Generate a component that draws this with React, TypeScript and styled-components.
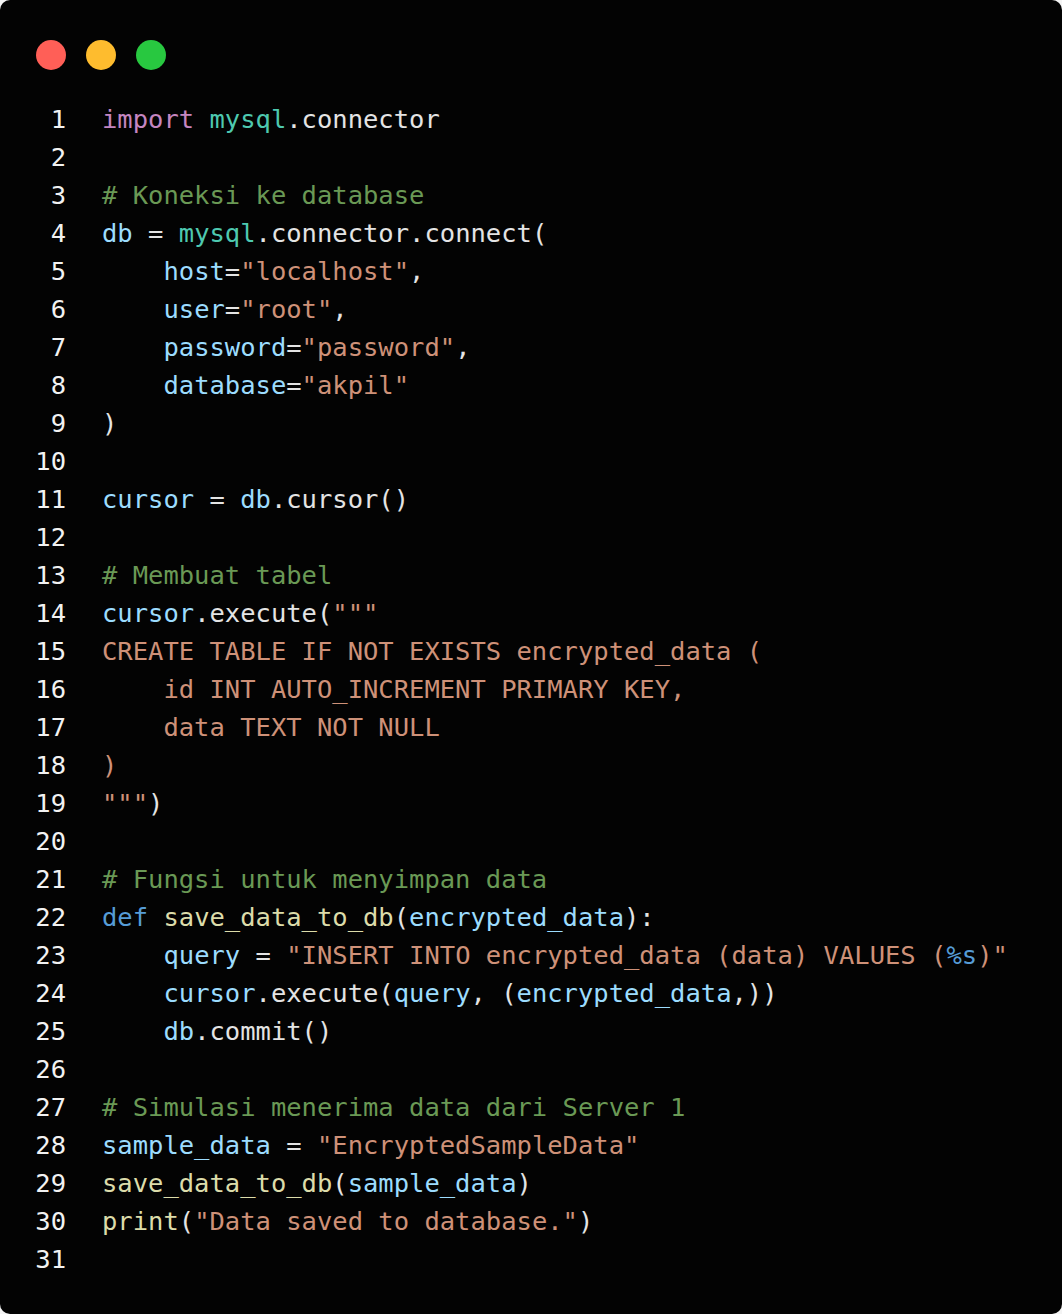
import React from "react";
import styled, { createGlobalStyle } from "styled-components";

const Global = createGlobalStyle`
  html, body { margin: 0; padding: 0; background: #f4f4f4; }
  #root { width: 1062px; }
`;

type Kind = "plain" | "kw" | "cls" | "var" | "str" | "com" | "def" | "fn" | "esc";

const colors: Record<Kind, string> = {
  plain: "#e4e4e4",
  kw: "#c586c0",
  cls: "#4ec9b0",
  var: "#9cdcfe",
  str: "#ce9178",
  com: "#6a9955",
  def: "#569cd6",
  fn: "#dcdcaa",
  esc: "#569cd6",
};

const Card = styled.div`
  width: 1062px;
  height: 1314px;
  box-sizing: border-box;
  background: #030303;
  border-radius: 10px;
  padding: 40px 0 0 24px;
  display: flex;
  flex-direction: column;
  gap: 30px;
  overflow: hidden;
`;

const Dots = styled.div`
  display: flex;
  gap: 20px;
  padding-left: 12px;
`;

const Dot = styled.span<{ $c: string }>`
  width: 30px;
  height: 30px;
  border-radius: 50%;
  background: ${(p) => p.$c};
`;

const Code = styled.div`
  display: flex;
  flex-direction: column;
  font-family: "DejaVu Sans Mono", "Liberation Mono", monospace;
  font-size: 25.5px;
  line-height: 38px;
`;

const Row = styled.div`
  display: grid;
  grid-template-columns: 42px 1fr;
  column-gap: 36px;
  height: 38px;
`;

const Num = styled.span`
  text-align: right;
  color: #f2f2f2;
`;

const Text = styled.span`
  white-space: pre;
  color: ${colors.plain};
`;

const Tok = styled.span<{ $k: Kind }>`
  color: ${(p) => colors[p.$k]};
`;

type Seg = [Kind, string];
const P = (s: string): Seg => ["plain", s];
const V = (s: string): Seg => ["var", s];
const S = (s: string): Seg => ["str", s];
const C = (s: string): Seg => ["com", s];
const F = (s: string): Seg => ["fn", s];

const lines: Seg[][] = [
  [["kw", "import"], P(" "), ["cls", "mysql"], P(".connector")],
  [],
  [C("# Koneksi ke database")],
  [V("db"), P(" = "), ["cls", "mysql"], P(".connector.connect(")],
  [P("    "), V("host"), P("="), S('"localhost"'), P(",")],
  [P("    "), V("user"), P("="), S('"root"'), P(",")],
  [P("    "), V("password"), P("="), S('"password"'), P(",")],
  [P("    "), V("database"), P("="), S('"akpil"')],
  [P(")")],
  [],
  [V("cursor"), P(" = "), V("db"), P(".cursor()")],
  [],
  [C("# Membuat tabel")],
  [V("cursor"), P(".execute("), S('"""')],
  [S("CREATE TABLE IF NOT EXISTS encrypted_data (")],
  [S("    id INT AUTO_INCREMENT PRIMARY KEY,")],
  [S("    data TEXT NOT NULL")],
  [S(")")],
  [S('"""'), P(")")],
  [],
  [C("# Fungsi untuk menyimpan data")],
  [["def", "def"], P(" "), F("save_data_to_db"), P("("), V("encrypted_data"), P("):")],
  [P("    "), V("query"), P(" = "), S('"INSERT INTO encrypted_data (data) VALUES ('), ["esc", "%s"], S(')"')],
  [P("    "), V("cursor"), P(".execute("), V("query"), P(", ("), V("encrypted_data"), P(",))")],
  [P("    "), V("db"), P(".commit()")],
  [],
  [C("# Simulasi menerima data dari Server 1")],
  [V("sample_data"), P(" = "), S('"EncryptedSampleData"')],
  [F("save_data_to_db"), P("("), V("sample_data"), P(")")],
  [F("print"), P("("), S('"Data saved to database."'), P(")")],
  [],
];

export default function App() {
  return (
    <>
      <Global />
      <Card>
        <Dots>
          <Dot $c="#ff5f57" />
          <Dot $c="#febc2e" />
          <Dot $c="#28c840" />
        </Dots>
        <Code>
          {lines.map((segs, i) => (
            <Row key={i}>
              <Num>{i + 1}</Num>
              <Text>
                {segs.map(([k, s], j) => (
                  <Tok key={j} $k={k}>
                    {s}
                  </Tok>
                ))}
              </Text>
            </Row>
          ))}
        </Code>
      </Card>
    </>
  );
}
